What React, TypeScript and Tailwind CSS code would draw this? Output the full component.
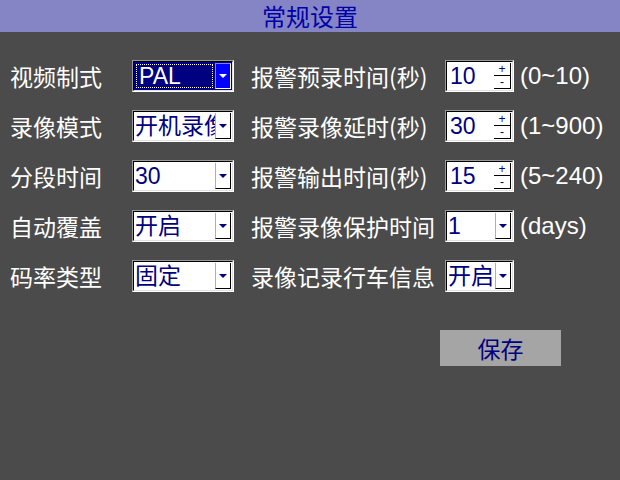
import React from "react";

const CJK = { fontFamily: '"Noto Sans CJK SC", "Noto Sans", sans-serif' };
const VAL = { fontFamily: '"Liberation Sans", "Noto Sans CJK SC", sans-serif' };
const LAT = { fontFamily: '"Liberation Sans", "Noto Sans CJK SC", sans-serif' };

function Arrow({ white }: { white?: boolean }) {
  return (
    <div
      className={
        white
          ? "w-0 h-0 border-x-[4px] border-x-transparent border-t-[4px] border-t-white"
          : "w-0 h-0 border-x-[4px] border-x-transparent border-t-[4px] border-t-[#000080]"
      }
    />
  );
}

function Frame({ children, w, selected }: { children: React.ReactNode; w: string; selected?: boolean }) {
  return (
    <div
      className={`${w} h-[32px] border border-t-[#9a9a9a] border-l-[#9a9a9a] border-r-white border-b-white shrink-0`}
    >
      <div
        className={
          selected
            ? "w-full h-full border border-t-black border-l-black border-r-[#e0e0e0] border-b-[#e0e0e0] bg-[#000080] flex items-stretch"
            : "w-full h-full border border-t-black border-l-black border-r-[#e0e0e0] border-b-[#e0e0e0] bg-white flex items-stretch"
        }
      >
        {children}
      </div>
    </div>
  );
}

function Dropdown({ value, w, selected }: { value: string; w: string; selected?: boolean }) {
  return (
    <Frame w={w} selected={selected}>
      {selected ? (
        <div className="flex-1 min-w-0 m-[2px] border border-dotted border-white flex items-center overflow-hidden">
          <span className="text-[23px] leading-[1.15] text-white pl-[2px] whitespace-nowrap" style={VAL}>
            {value}
          </span>
        </div>
      ) : (
        <div className="flex-1 min-w-0 flex items-center overflow-hidden">
          <span className="text-[23px] leading-[1.15] text-[#000080] pl-[1px] whitespace-nowrap" style={VAL}>
            {value}
          </span>
        </div>
      )}
      {selected ? (
        <div className="w-[16px] my-[1px] mr-[1px] bg-[#0000ff] border border-t-[#8080ff] border-l-[#8080ff] border-r-white border-b-white flex items-center justify-center">
          <Arrow white />
        </div>
      ) : (
        <div className="w-[16px] mt-[1px] mb-[1px] mr-[1px] border-r border-b border-r-black border-b-black border-l border-l-[#b0b0b0] flex items-center justify-center">
          <Arrow />
        </div>
      )}
    </Frame>
  );
}

function Spin({ value }: { value: string }) {
  return (
    <Frame w="w-[69px]">
      <div className="flex-1 min-w-0 flex items-center overflow-hidden">
        <span className="text-[23px] leading-[1.15] text-[#000080] pl-[3px]" style={VAL}>
          {value}
        </span>
      </div>
      <div className="w-[17px] flex flex-col mr-[1px] my-[1px]">
        <div className="flex-1 border-r border-b border-r-black border-b-black flex items-center justify-center text-[12px] leading-none text-[#000080]" style={LAT}>
          +
        </div>
        <div className="flex-1 border-r border-b border-r-black border-b-black flex items-center justify-center text-[12px] leading-none text-[#000080]" style={LAT}>
          -
        </div>
      </div>
    </Frame>
  );
}

type Row = {
  left: string;
  leftVal: string;
  selected?: boolean;
  right: string;
  kind: "spin" | "drop";
  rightVal: string;
  range?: string;
};

const rows: Row[] = [
  { left: "视频制式", leftVal: "PAL", selected: true, right: "报警预录时间(秒)", kind: "spin", rightVal: "10", range: "(0~10)" },
  { left: "录像模式", leftVal: "开机录像", right: "报警录像延时(秒)", kind: "spin", rightVal: "30", range: "(1~900)" },
  { left: "分段时间", leftVal: "30", right: "报警输出时间(秒)", kind: "spin", rightVal: "15", range: "(5~240)" },
  { left: "自动覆盖", leftVal: "开启", right: "报警录像保护时间", kind: "drop", rightVal: "1", range: "(days)" },
  { left: "码率类型", leftVal: "固定", right: "录像记录行车信息", kind: "drop", rightVal: "开启" },
];

export default function App() {
  return (
    <div className="w-[620px] h-[480px] bg-[#4b4b4b] flex flex-col overflow-hidden" style={CJK}>
      <div className="h-[32px] bg-[#8585c5] flex items-center justify-center">
        <span className="text-[24px] leading-[1.5] text-[#0000a8]" style={CJK}>
          常规设置
        </span>
      </div>
      <div className="flex flex-col gap-[18px] pt-[28px]">
        {rows.map((r, i) => (
          <div key={i} className="flex items-center h-[32px]">
            <div className="w-[132px] pl-[10px] text-[23px] leading-[1.5] text-white whitespace-nowrap" style={CJK}>
              {r.left}
            </div>
            <Dropdown value={r.leftVal} w="w-[102px]" selected={r.selected} />
            <div className="ml-[17px] w-[184px] overflow-hidden text-[23px] leading-[1.5] text-white whitespace-nowrap" style={CJK}>
              {r.right}
            </div>
            <div className="ml-[10px]">
              {r.kind === "spin" ? <Spin value={r.rightVal} /> : <Dropdown value={r.rightVal} w="w-[69px]" />}
            </div>
            {r.range && (
              <div className="ml-[6px] text-[24px] leading-[1.2] text-white whitespace-nowrap" style={LAT}>
                {r.range}
              </div>
            )}
          </div>
        ))}
      </div>
      <div className="mt-[38px] ml-[440px] w-[121px] h-[36px] bg-[#a5a5a5] flex items-center justify-center">
        <span className="text-[23px] leading-[1.5] text-[#000080]" style={CJK}>
          保存
        </span>
      </div>
    </div>
  );
}
